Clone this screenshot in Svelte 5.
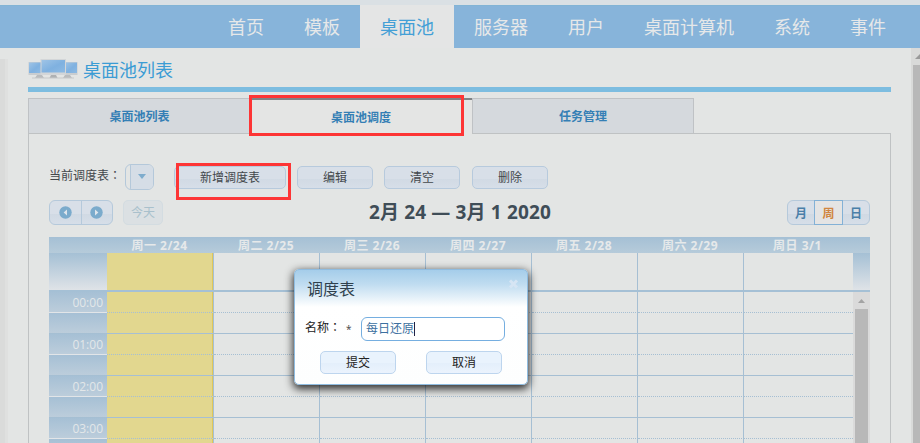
<script>
  const nav = ['首页', '模板', '桌面池', '服务器', '用户', '桌面计算机', '系统', '事件'];
  const tabs = ['桌面池列表', '桌面池调度', '任务管理'];
  const days = ['周一 2/24', '周二 2/25', '周三 2/26', '周四 2/27', '周五 2/28', '周六 2/29', '周日 3/1'];
  const slots = ['00:00', '', '01:00', '', '02:00', '', '03:00', ''];
  let name = $state('每日还原');
</script>

<div class="page">
  <nav>
    {#each nav as item}
      <a class:active={item === '桌面池'}>{item}</a>
    {/each}
  </nav>

  <div class="body">
    <div class="side"></div>
    <main>
      <header>
        <svg class="logo" width="50" height="21" viewBox="0 0 50 21">
          <defs>
            <linearGradient id="scr" x1="0" y1="0" x2="1" y2="1">
              <stop offset="0" stop-color="#9fc4e6" />
              <stop offset=".55" stop-color="#7fb1e0" />
              <stop offset="1" stop-color="#8dbae3" />
            </linearGradient>
          </defs>
          <rect x=".5" y="3" width="14" height="13" fill="#c9cdd0" />
          <rect x="1" y="3.5" width="12" height="10.500" fill="url(#scr)" />
          <rect x="36" y="3" width="13.5" height="13" fill="#c9cdd0" />
          <rect x="37" y="3.5" width="12" height="10.500" fill="url(#scr)" />
          <path d="M9 16h5l2 3H7zM37 16h5l2 3h-9z" fill="#b9bcbe" />
          <rect x="12.5" y="0" width="25.5" height="16" fill="#d3d6d8" />
          <rect x="13.500" y="1" width="23.500" height="12.500" fill="url(#scr)" />
          <path d="M23 16h5l1.500 3h-8z" fill="#aeb1b3" />
          <path d="M4 19h42" stroke="#c7c9ca" />
        </svg>
        <h1>桌面池列表</h1>
      </header>
      <div class="rule"></div>

      <div class="tabs">
        {#each tabs as tab, i}
          <div class="tab" class:current={i === 1}>{tab}{#if i === 1}<i class="mark tabmark"></i>{/if}</div>
        {/each}
      </div>

      <section>
        <div class="tools">
          <span class="label">当前调度表<span class="colon">：</span></span>
          <div class="select"><b></b><span><svg width="8" height="5"><path d="M0 0h8L4 5z" fill="#7eaccd" /></svg></span></div>
          <button class="wide">新增调度表</button>
          <button>编辑</button>
          <button class="clear">清空</button>
          <button>删除</button>
          <i class="mark btnmark"></i>
        </div>

        <div class="calbar">
          <div class="group arrows">
            <span><svg width="13" height="13" viewBox="0 0 13 13"><circle cx="6.500" cy="6.500" r="6.200" fill="#7babcc" /><path d="M8 3.500v6L4.600 6.500z" fill="#dfe5ec" /></svg></span>
            <span><svg width="13" height="13" viewBox="0 0 13 13"><circle cx="6.500" cy="6.500" r="6.200" fill="#7babcc" /><path d="M5 3.500v6l3.400-3z" fill="#dfe5ec" /></svg></span>
          </div>
          <div class="today">今天</div>
          <h2>2月 24 — 3月 1 2020</h2>
          <div class="group views"><span>月</span><span class="on">周</span><span>日</span></div>
        </div>

        <div class="calendar">
          <div class="row heads">
            <div class="axis"></div>
            {#each days as day}<div class="day">{day}</div>{/each}
            <div class="gutter"></div>
          </div>
          <div class="row allday">
            <div class="axis"></div>
            {#each days as _}<div class="day"></div>{/each}
            <div class="gutter"></div>
          </div>
          <div class="scroller">
            <div class="grid">
              {#each slots as slot, i}
                <div class="row slot" class:half={i % 2 === 0}>
                  <div class="axis">{slot}</div>
                  {#each days as _}<div class="day"></div>{/each}
                </div>
              {/each}
            </div>
            <div class="inner">
              <svg width="7" height="4"><path d="M0 4h7L3.500 0z" fill="#a3a3a3" /></svg>
              <div></div>
            </div>
          </div>
        </div>
      </section>
    </main>
    <div class="outer">
      <svg width="10" height="5"><path d="M0 5h10L5 0z" fill="#9a9a9a" /></svg>
      <div></div>
    </div>
  </div>

  <div class="dialog">
    <div class="dhead">
      <span>调度表</span>
      <svg width="11" height="10" viewBox="0 0 11 10"><path d="M2 1.500l7 7M9 1.500l-7 7" stroke="#d6e5f4" stroke-width="3" /></svg>
    </div>
    <div class="field"><span class="fname">名称<span class="colon">：</span></span><em>*</em><div class="input">{name}<i></i></div></div>
    <div class="actions"><button>提交</button><button>取消</button></div>
  </div>
</div>

<style>
  :global(body) { margin: 0; overflow: hidden; }
  .page, .page * { box-sizing: border-box; }
  .page {
    position: relative; width: 920px; height: 443px; overflow: hidden; padding-top: 5px;
    display: flex; flex-direction: column;
    background: linear-gradient(#dae0e4 0 5px, #e3e5e4 5px);
    font: 12px "Open Sans", "Noto Sans CJK SC", sans-serif; color: #43484c;
  }
  .colon { font-family: "Noto Sans CJK TC", sans-serif; line-height: 1; }
  nav { height: 43px; flex: none; background: #87b4da; border-top: 1px solid #82b4d5; display: flex; justify-content: flex-end; padding-right: 14px; }
  nav a { padding: 0 20px; font-size: 18px; line-height: 42px; color: #e6e8e9; white-space: nowrap; font-weight: 400; height: 42px; }
  nav .active { background: #e4e5e5; color: #439fd6; margin-top: -1px; height: 43px; line-height: 44px; }
  .body { display: flex; flex: 1; min-height: 0; }
  .side { width: 8px; margin: 11px 20px 0 0; flex: none; background: linear-gradient(90deg, #dadbda 5px, #dfe0df 5px); }
  main { width: 863px; flex: none; }
  header { height: 39px; display: flex; align-items: flex-start; padding-top: 11px; gap: 5px; }
  .logo { flex: none; }
  h1 { margin: 0; font-size: 18px; font-weight: 400; line-height: 23px; color: #3b9cd4; }
  .rule { height: 5px; background: #7dbde0; }
  .tabs { display: flex; height: 35px; margin-top: 6px; }
  .tab { position: relative; width: 222px; text-align: center; line-height: 35px; font-weight: bold; color: #347fb5; background: #d5d9dd; border: 1px solid #bfc2c5; border-width: 1px 0 0 1px; }
  .tab:last-child { width: 223px; margin-left: -1px; border-right-width: 1px; border-left-width: 2px; }
  .current { background: #e4e5e4; border: 0; border-top: 2px solid #808385; height: 36px; z-index: 1; }
  .mark { position: absolute; border: 3px solid #fd3535; }
  .tabmark { left: -1px; top: -5px; width: 215px; height: 41px; }
  section { border: 1px solid #bfc2c3; border-bottom: 0; padding: 30px 20px 0; height: 310px; }
  .tools { display: flex; height: 26px; align-items: center; position: relative; }
  .label { width: 76px; white-space: nowrap; line-height: 22px; margin-top: -2px; }
  .select { width: 29px; height: 26px; display: flex; border: 1px solid #b4c8da; border-radius: 6px; overflow: hidden; margin-right: 20px; }
  .select b { width: 5px; border-right: 1px solid #b4c8da; }
  .select span { flex: 1; display: flex; align-items: center; justify-content: center; padding: 0 0 1px 0; background: #d5dde6; }
  button { width: 76px; height: 23px; padding: 0; border: 1px solid #b7cadd; border-radius: 5px; background: linear-gradient(#d8dfe8 55%, #d1dae4 55%, #d6dee8); font: inherit; color: #43484c; line-height: 21px; }
  .tools button { margin-right: 11px; }
  .tools .wide { width: 112px; }
  .tools .clear { margin-right: 12px; }
  .btnmark { left: 127px; top: -1px; width: 115px; height: 37px; }
  .calbar { display: flex; height: 25px; margin-top: 10px; position: relative; }
  .group { display: flex; border: 1px solid #b5c9db; border-radius: 6px; background: linear-gradient(#d8dfe8 55%, #d0d9e3 55%, #d6dee8); }
  .group span { display: flex; align-items: center; justify-content: center; }
  .arrows { width: 64px; }
  .arrows span { width: 31px; padding-bottom: 1px; }
  .arrows span + span { border-left: 1px solid #b5c9db; width: 32px; }
  .today { width: 40px; margin-left: 10px; border: 1px solid #d3dce1; border-radius: 5px; background: #dbe0e3; color: #a9c0cc; text-align: center; line-height: 23px; }
  h2 { margin: 0; flex: 1; padding-left: 24px; text-align: center; font-size: 19px; letter-spacing: .16px; line-height: 24px; color: #3f4d57; white-space: nowrap; }
  .views { width: 83px; margin-left: 54px; color: #4a7fa8; font-weight: bold; }
  .views span { width: 26px; }
  .views .on { width: 29px; margin: -1px 0; border: 1px solid #83b1d6; background: #e4e4e4; color: #d08640; }
  .calendar { margin-top: 12px; height: 206px; overflow: hidden; }
  .row { display: flex; }
  .axis { width: 58px; flex: none; }
  .day { width: 106px; flex: none; border-right: 1px solid #a6bfd3; }
  .day:nth-child(2) { width: 107px; }
  .day:nth-child(8) { width: 109px; border-right: 0; }
  .gutter { width: 17px; flex: none; }
  .heads { height: 16px; background: linear-gradient(#a5c0d5, #b6cbda); }
  .heads .day { border: 0; text-align: center; line-height: 17px; font-weight: bold; color: #e6e9ea; letter-spacing: .5px; padding-right: 2px; }
  .allday { height: 39px; border-bottom: 2px solid #a5c0d5; }
  .allday .axis, .allday .gutter { background: linear-gradient(#a5c0d5, #dfe3e7); }
  .allday .day:nth-child(2), .slot .day:nth-child(2) { background: #e2d78f; box-shadow: inset -1px 0 #e0c85a; }
  .scroller { display: flex; height: 151px; overflow: hidden; }
  .grid { width: 804px; flex: none; }
  .slot { height: 21px; }
  .slot .axis { background: linear-gradient(#a6c0d5, #bccddb); border-bottom: 1px solid #a5bfd3; text-align: right; padding-right: 4px; line-height: 21px; color: #e3e7e9; }
  .slot.half .axis { border-bottom-color: #e2e5e8; }
  .slot .day { border-bottom: 1px solid #a6bfd3; }
  .slot.half .day { border-bottom-style: dotted; }
  .inner { width: 17px; flex: none; background: #dadada; display: flex; flex-direction: column; align-items: center; padding: 7px 2px 0; }
  .inner svg { flex: none; }
  .inner div { margin-top: 6px; flex: 1; width: 13px; background: #b8b8b8; }
  .outer { margin-left: 20px; width: 9px; flex: none; background: #d9dad9; overflow: hidden; display: flex; flex-direction: column; padding: 6px 0 0 2px; }
  .outer svg { flex: none; margin-left: 2px; }
  .outer div { margin-top: 6px; flex: 1; background: #b8b8b8; }
  .dialog { position: absolute; left: 294px; top: 269px; width: 234px; height: 116px; z-index: 2; border: 1px solid #8fbce0; border-radius: 5px; background: linear-gradient(#a5cdea 0, #bfdcf0 14px, #fff 37px, #fdfefe); box-shadow: 0 3px 8px 1px rgba(0, 0, 0, .8); color: #222; }
  .dhead { display: flex; justify-content: space-between; height: 47px; padding: 7px 8px 0 12px; font-size: 16px; line-height: 24px; color: #2f404d; }
  .dhead svg { margin-top: 2px; }
  .field { display: flex; height: 24px; line-height: 22px; padding-left: 10px; }
  .fname { width: 41px; white-space: nowrap; }
  .field em { width: 15px; font-style: normal; font-size: 10px; line-height: 25px; color: #444; }
  .input { width: 144px; height: 24px; border: 1px solid #75aee0; border-radius: 6px; padding-left: 4px; background: #fff; color: #3c70a0; display: flex; align-items: center; }
  .input i { width: 1px; height: 14px; background: #224; }
  .actions { display: flex; gap: 30px; padding: 10px 0 0 25px; }
  .actions button { color: #222; border-color: #bdd5ee; background: linear-gradient(#e9f3fd 50%, #e3effb 50%, #ebf3fd); }
</style>
